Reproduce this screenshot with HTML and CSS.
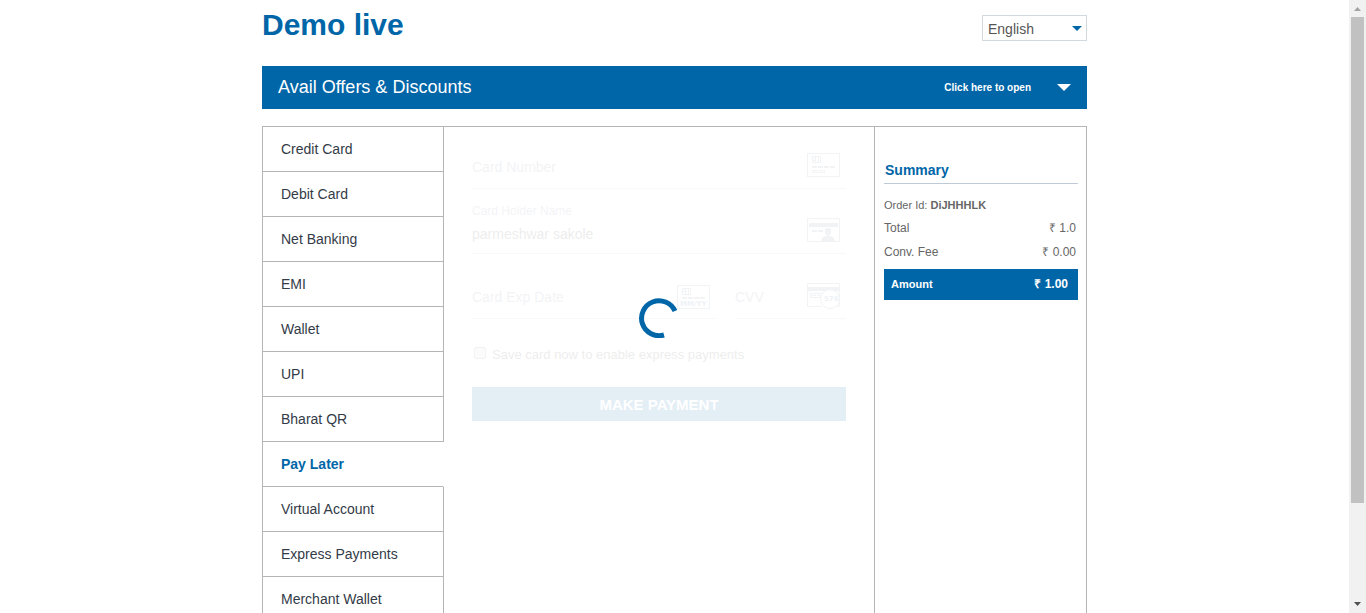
FILE: index.html
```html
<!DOCTYPE html>
<html lang="en">
<head>
<meta charset="utf-8">
<title>Demo live</title>
<link rel="stylesheet" href="styles.css">
</head>
<body>
<div class="page">
  <div class="container">
    <header class="header">
      <h1 class="brand">Demo live</h1>
      <div class="language">
        <select class="language-select" aria-label="Language"><option>English</option></select>
        <svg class="language-arrow" width="10" height="5" viewBox="0 0 10 5" aria-hidden="true"><path d="M0 0h10L5 5z" fill="#0066a8"/></svg>
      </div>
    </header>
    <button class="offers" type="button">
      <span class="offers-title">Avail Offers &amp; Discounts</span>
      <span class="offers-hint">Click here to open</span>
      <svg width="14" height="7" viewBox="0 0 14 7" aria-hidden="true"><path d="M0 0h14L7 7z" fill="#fff"/></svg>
    </button>
    <div class="checkout">
      <nav class="methods">
        <a class="method" href="#">Credit Card</a>
        <a class="method" href="#">Debit Card</a>
        <a class="method" href="#">Net Banking</a>
        <a class="method" href="#">EMI</a>
        <a class="method" href="#">Wallet</a>
        <a class="method" href="#">UPI</a>
        <a class="method" href="#">Bharat QR</a>
        <a class="method active" href="#">Pay Later</a>
        <a class="method" href="#">Virtual Account</a>
        <a class="method" href="#">Express Payments</a>
        <a class="method" href="#">Merchant Wallet</a>
      </nav>
      <main class="payment">
        <form class="card-form">
          <div class="field">
            <input class="field-input" type="text" aria-label="Card Number" placeholder="Card Number">
            <svg class="field-icon" width="33" height="24" viewBox="0 0 33 24" fill="none" stroke="#8490a0" aria-hidden="true">
              <rect x=".5" y=".5" width="32" height="23"/>
              <path d="M5.5 3.5h8v6h-8zM8.5 3.5v6M11.5 3.5v6M5.5 5.5h3M5.5 7.5h3"/>
              <path d="M5 14h5M11 14h5M17 14h5M23 14h5" stroke-width="2"/>
              <path d="M5.500 17.500h5v2h-5zM12.500 17.500h5v2h-5z"/>
            </svg>
          </div>
          <div class="field">
            <div class="field-stack">
              <label class="field-label" for="holder">Card Holder Name</label>
              <input class="field-input filled" id="holder" type="text" value="parmeshwar sakole">
            </div>
            <svg class="field-icon" width="33" height="24" viewBox="0 0 33 24" fill="none" stroke="#8490a0" aria-hidden="true">
              <rect x=".5" y=".5" width="32" height="23"/>
              <path d="M2 7h29" stroke-width="4"/>
              <path d="M5 13h5M11 13h5" stroke-width="2"/>
              <path d="M18 12q0-2 3-2t3 2v3q0 2-2 2v1q5 0 6 5H14q1-5 6-5v-1q-2 0-2-2z" fill="#8490a0" stroke="none"/>
            </svg>
          </div>
          <div class="field-pair">
            <div class="field expiry">
              <input class="field-input" type="text" aria-label="Card Exp Date" placeholder="Card Exp Date">
              <svg class="field-icon low" width="33" height="24" viewBox="0 0 33 24" fill="none" stroke="#8490a0" aria-hidden="true">
                <rect x=".5" y=".5" width="32" height="23"/>
                <path d="M5.500 3.500h8v6h-8zM8.500 3.500v6M11.500 3.500v6M5.500 6.500h3"/>
                <path d="M5 13h5M11 13h5M17 13h5M23 13h5" stroke-width="2"/>
                <text class="icon-text" x="3" y="21">MM/YY</text>
              </svg>
            </div>
            <div class="field cvv">
              <input class="field-input" type="text" aria-label="CVV" placeholder="CVV">
              <svg class="field-icon low" width="33" height="26" viewBox="0 0 33 26" fill="none" stroke="#8490a0" aria-hidden="true">
                <path d="M32.500 8V.5H.5v23h14M32.500 8v15.500h-3"/>
                <path d="M0 6h33" stroke-width="4"/>
                <path d="M14 14.500H3.500v-4h12M5 12.500h4M10 12.500h4"/>
                <circle cx="23" cy="16" r="9.500" fill="#fff"/>
                <text class="icon-text" x="17" y="18">576</text>
              </svg>
            </div>
          </div>
          <label class="save"><input class="save-box" type="checkbox">Save card now to enable express payments</label>
          <button class="pay" type="button">MAKE PAYMENT</button>
        </form>
        <svg class="spinner" width="40" height="40" viewBox="0 0 40 40" fill="none" role="img" aria-label="Loading"><path d="M36 13A17.500 17.500 0 1 0 25 37" stroke="#0066a8" stroke-width="5"/></svg>
      </main>
      <aside class="summary">
        <h2 class="summary-title">Summary</h2>
        <p class="order">Order Id: <b>DiJHHHLK</b></p>
        <div class="line"><span>Total</span><span>₹ 1.0</span></div>
        <div class="line"><span>Conv. Fee</span><span>₹ 0.00</span></div>
        <div class="line amount"><span class="amount-label">Amount</span><span>₹ 1.00</span></div>
      </aside>
    </div>
  </div>
</div>
<div class="scrollbar" aria-hidden="true">
  <svg width="17" height="17" viewBox="0 0 17 17"><path d="M5 11h7L8.500 7z" fill="#a3a3a3"/></svg>
  <div class="track"><div class="thumb"></div></div>
  <svg width="17" height="17" viewBox="0 0 17 17"><path d="M5 6h7L8.500 10z" fill="#505050"/></svg>
</div>
</body>
</html>
```

FILE: styles.css
```css
* { box-sizing: border-box; }
body {
  display: flex;
  height: 100vh;
  margin: 0;
  overflow: hidden;
  background: #fff;
  font-family: "Liberation Sans", Arial, sans-serif;
  font-size: 14px;
  color: #333b47;
}
input, select, button { font: inherit; border: 0; border-radius: 0; }
.page { flex: 1; min-width: 0; overflow: hidden; }
.container { max-width: 825px; margin: 0 auto; }
.header {
  display: flex;
  justify-content: space-between;
  align-items: flex-start;
  height: 66px;
  padding-top: 7px;
}
.brand { margin: 0; font-size: 30px; line-height: 35px; color: #0066a8; }
.language { display: grid; align-items: center; width: 105px; margin-top: 8px; }
.language-select {
  grid-area: 1 / 1;
  appearance: none;
  width: 100%;
  height: 26px;
  padding: 1px 5px 0;
  border: 1px solid #cfd9de;
  background: #fff;
  color: #555;
}
.language-arrow { grid-area: 1 / 1; justify-self: end; margin-right: 5px; pointer-events: none; }
.offers {
  display: flex;
  align-items: center;
  width: 100%;
  height: 43px;
  padding: 0 16px;
  background: #0066a8;
  color: #fff;
  text-align: left;
}
.offers-title { flex: 1; font-size: 18px; }
.offers-hint { margin-right: 26px; font-size: 10px; font-weight: bold; }
.checkout {
  display: flex;
  min-height: 560px;
  margin-top: 17px;
  border: 1px solid #b5b5b5;
  border-left: 0;
}
.methods { display: flex; flex: none; flex-direction: column; width: 182px; border-left: 1px solid #b5b5b5; }
.method {
  height: 45px;
  padding-left: 18px;
  border-right: 1px solid #b5b5b5;
  border-bottom: 1px solid #b5b5b5;
  line-height: 44px;
  color: #333b47;
  text-decoration: none;
}
.method.active { border-right-color: transparent; font-weight: bold; color: #0066a8; }
.payment {
  display: grid;
  grid-template-columns: minmax(0, 1fr);
  flex: 1;
  align-items: start;
  min-width: 0;
  padding: 0 28px;
}
.card-form { grid-area: 1 / 1; display: flex; flex-direction: column; opacity: .1; }
.field {
  display: flex;
  align-items: flex-end;
  height: 65px;
  border-bottom: 1px solid #c0c4cc;
}
.card-form > .field:first-child { height: 62px; }
.field-stack { display: flex; flex: 1; flex-direction: column; min-width: 0; }
.field-label { font-size: 12px; line-height: 14px; color: #8a93a5; }
.field-input {
  flex: 1;
  min-width: 0;
  height: 24px;
  margin-bottom: 9px;
  padding: 0;
  background: transparent;
  color: #555;
}
.field-input.filled { flex: none; margin: 4px 0 7px; }
.field-input::placeholder { color: #8a93a5; opacity: 1; }
.field-icon { flex: none; margin: 0 6px 11px 0; }
.field-icon.low { margin-bottom: 9px; }
.icon-text { font: bold 7px "DejaVu Sans", sans-serif; fill: #4f86b4; stroke: none; }
.field-pair { display: flex; gap: 19px; }
.expiry { flex: 244; min-width: 0; }
.cvv { flex: 111; min-width: 0; }
.save { display: flex; align-items: center; gap: 6px; margin-top: 27px; font-size: 13px; line-height: 18px; color: #555; }
.save-box {
  appearance: none;
  width: 12px;
  height: 12px;
  margin: 0 0 4px 2px;
  border: 1px solid #888;
  border-radius: 2px;
  background: #ddd;
}
.pay { height: 34px; margin-top: 23px; background: #0060a8; color: #fff; font-size: 15px; font-weight: bold; }
.spinner { grid-area: 1 / 1; justify-self: center; z-index: 1; margin-top: 171px; }
.summary { flex: none; width: 212px; padding: 34px 8px 0 9px; border-left: 1px solid #b5b5b5; color: #666; font-size: 12px; }
.summary-title {
  margin: 0;
  padding: 0 1px 4px;
  border-bottom: 1px solid #c0cad6;
  font-size: 14px;
  line-height: 18px;
  color: #0066a8;
}
.order { margin: 13px 0 3px; font-size: 11px; line-height: 16px; }
.line { display: flex; justify-content: space-between; align-items: baseline; height: 24px; padding-right: 2px; line-height: 24px; }
.line.amount { height: 31px; margin-top: 5px; padding: 0 10px 0 7px; background: #0066a8; color: #fff; font-weight: bold; line-height: 30px; }
.amount-label { font-size: 11px; }
.scrollbar { display: flex; flex-direction: column; width: 17px; background: #f1f1f1; }
.track { flex: 1; padding: 0 2px; }
.thumb { height: 84%; background: #c1c1c1; }
```
